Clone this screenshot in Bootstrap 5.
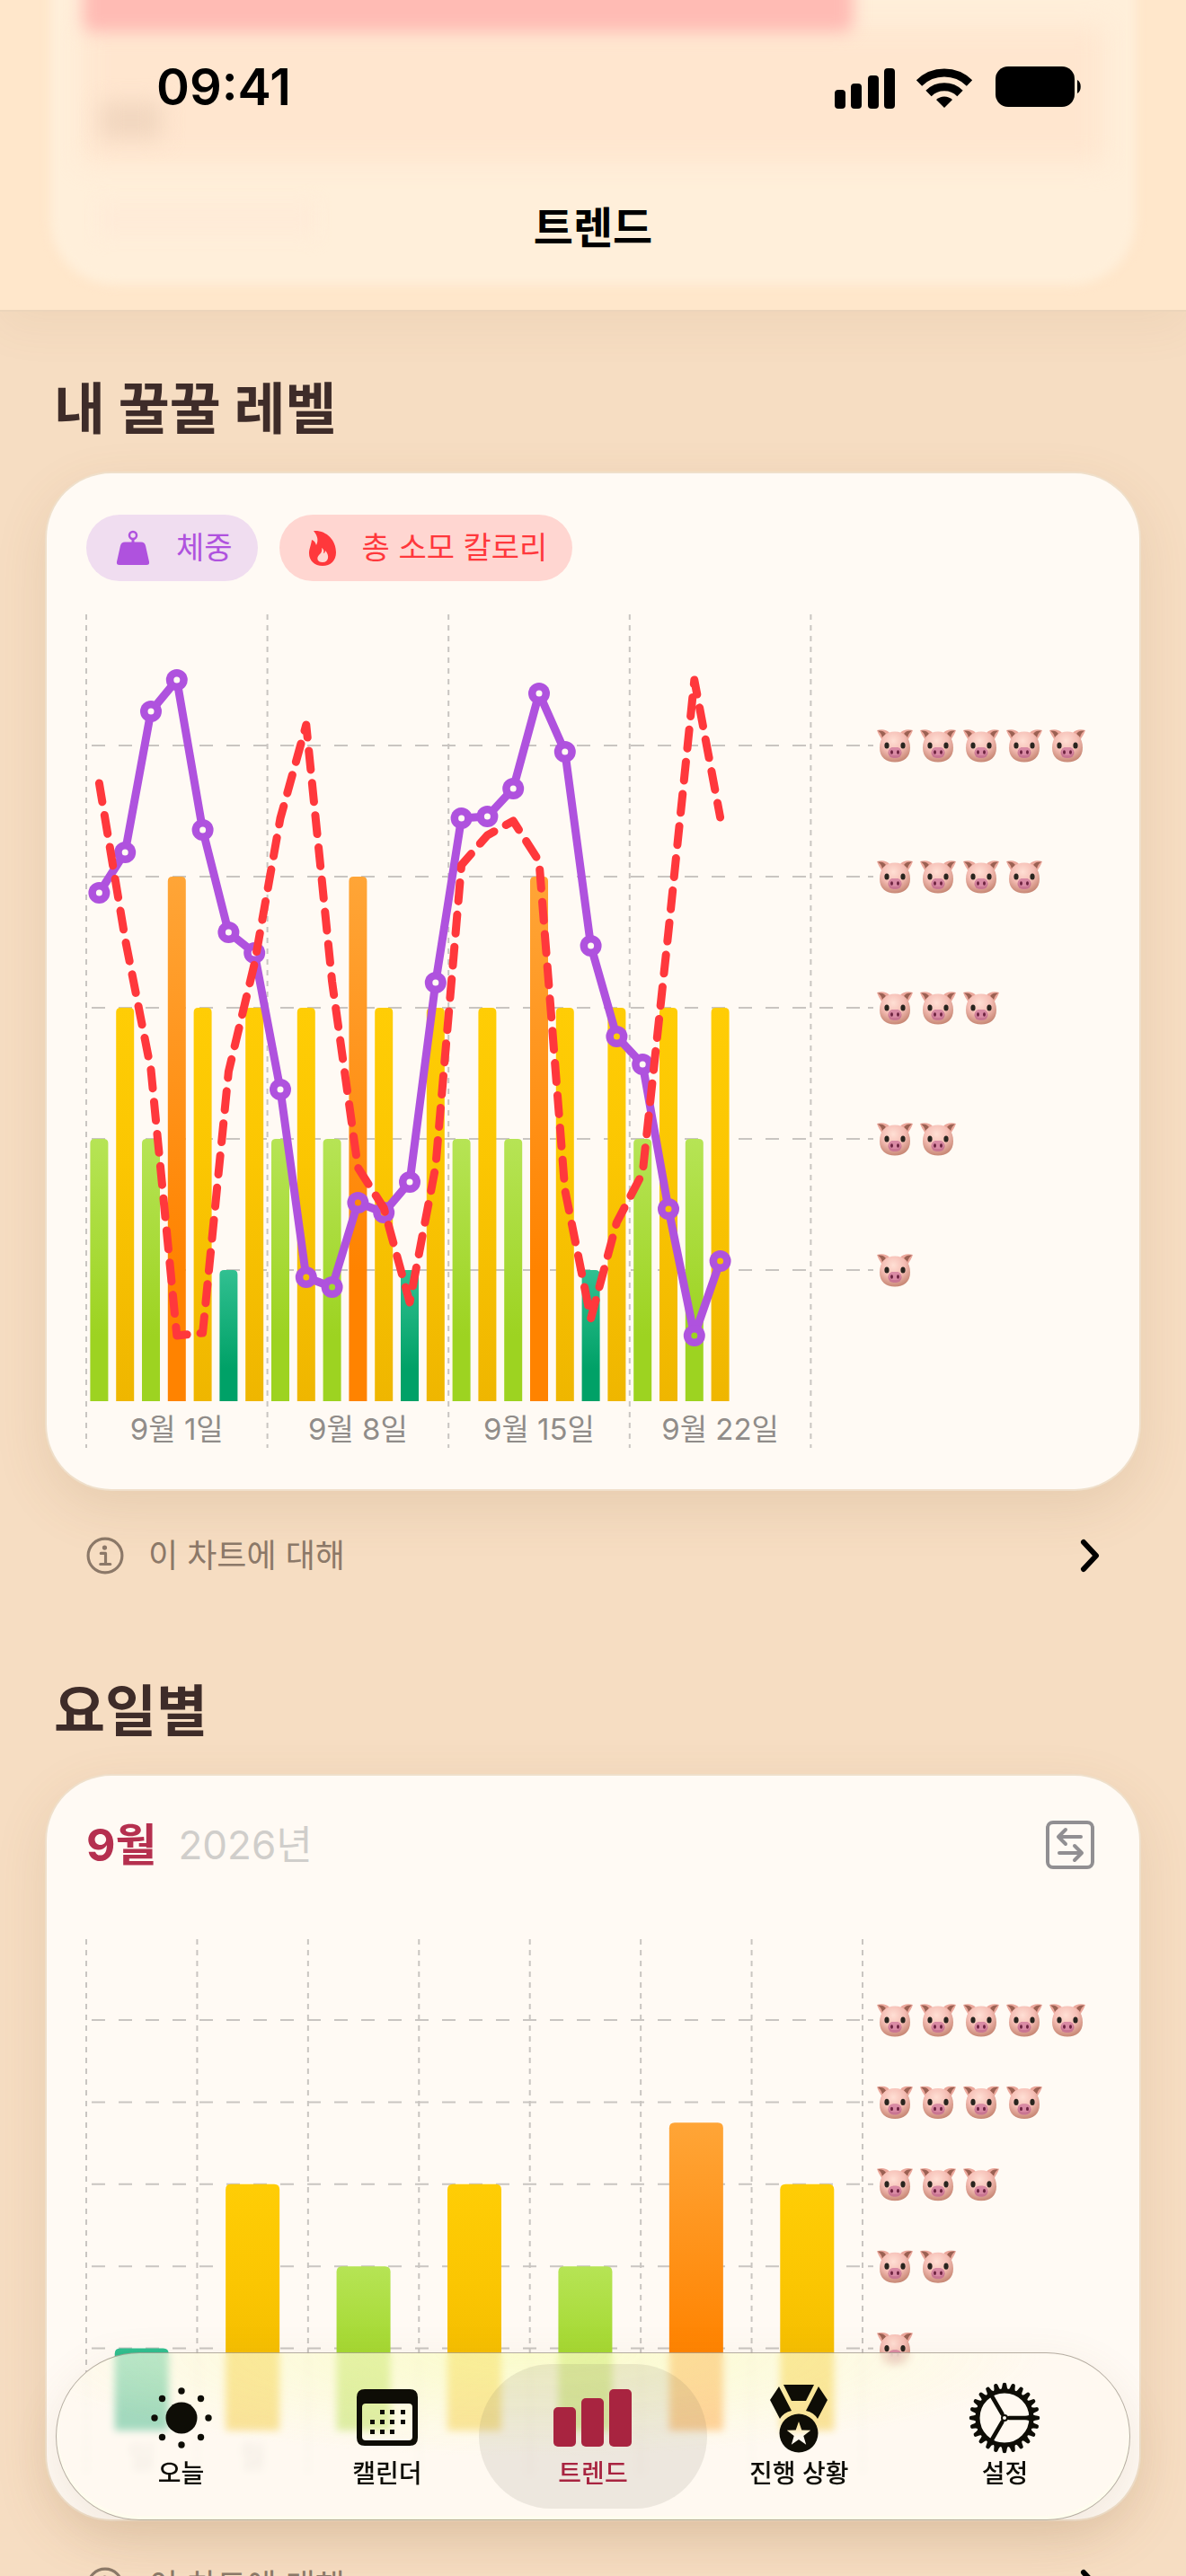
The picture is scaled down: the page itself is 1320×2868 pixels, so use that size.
<!DOCTYPE html>
<html lang="ko">
<head>
<meta charset="utf-8">
<meta name="viewport" content="width=device-width, initial-scale=1">
<title>트렌드</title>
<link href="https://cdn.jsdelivr.net/npm/bootstrap@5.3.0/dist/css/bootstrap.min.css" rel="stylesheet">
<style>
  body { font-family: Inter, "Noto Sans CJK KR", sans-serif; background: #f6ddc2; color: #000; }
  .app-screen { padding: 0 52px; }
  .top-bar { height: 347px; margin: 0 -52px; background: #ffe7cb; border-bottom: 2px solid #ecd5bb; box-shadow: 0 16px 48px rgba(150, 110, 70, .07); }
  .under { inset: 0; pointer-events: none; }
  .under-panel { inset: -80px 56px 28px; border-radius: 72px; background: #ffefda; filter: blur(6px); }
  .under-field { inset: 30px 92px 164px; background: #ffe6cf; filter: blur(14px); }
  .under-bar { left: 92px; top: -60px; width: 65%; height: 96px; background: #ffbbb4; filter: blur(9px); border-radius: 12px; }
  .under-mark { left: 112px; top: 114px; width: 68px; height: 40px; background: #f1d6bf; filter: blur(12px); }
  .under-note { left: 110px; top: 226px; width: 240px; height: 36px; background: #ffebd8; filter: blur(10px); }
  .status-row { height: 194px; padding: 0 114px 0 174px; }
  .clock { font-size: 56px; font-weight: 600; line-height: 64px; }
  .page-title { font-size: 48px; font-weight: 600; line-height: 64px; margin: 28px 0 0; }
  .section-title { font-size: 62px; font-weight: 700; line-height: 76px; color: #3e2c29; padding-left: 8px; margin: 0 0 33px; }
  .section-first { margin-top: 71px; }
  .section-next { margin-top: 102px; }
  .panel { background: #fffaf4; border: 0; border-radius: 72px; padding: 46px 44px; box-shadow: 0 0 0 2px #efdfca, 0 20px 60px rgba(140, 100, 60, .14); }
  .pill { height: 74px; padding: 0 28px 0 32px; gap: 28px; font-size: 34px; line-height: 40px; border: 0; }
  .pill-weight { background: #f0ddf0; color: #af52de; }
  .pill-energy { background: #ffd6d1; color: #ff383c; }
  .pill-row { gap: 24px; margin-bottom: 37px; }
  .chart { display: block; width: 100%; height: auto; overflow: visible; }
  .chart text { font-size: 33px; fill: #908c89; text-anchor: middle; }
  .rule-v { stroke: #c9c5c1; stroke-width: 2; stroke-dasharray: 6 6; }
  .rule-h { stroke: #c9c5c1; stroke-width: 2; stroke-dasharray: 15 15; }
  .about { height: 68px; margin: 40px 0 0; padding: 0 44px; color: #8c7969; font-size: 36px; line-height: 44px; }
  .about:hover { color: #8c7969; }
  .about-gap { gap: 27px; }
  .period { gap: 24px; margin-bottom: 74px; }
  .period-month { font-size: 50px; font-weight: 700; line-height: 62px; color: #b5304f; }
  .period-year { font-size: 44px; font-weight: 400; line-height: 62px; color: #d0cecb; }
  .swap-btn { color: #918f92; line-height: 0; margin-right: 6px; }
  .tab-dock { padding: 0 62px 62px; }
  .tab-glass { height: 187px; border-radius: 94px; padding: 12px 24px; border: 1px solid rgba(120, 110, 95, .55);
    background: radial-gradient(ellipse 48% 62% at 44% 0, rgba(244, 255, 150, .42), rgba(250, 255, 200, 0)), rgba(255, 249, 239, .64);
    -webkit-backdrop-filter: blur(4px); backdrop-filter: blur(4px); box-shadow: 0 16px 50px rgba(140, 100, 60, .12), inset 0 -3px 3px rgba(255, 255, 235, .8); }
  .tab-item { color: #0e0d06; font-size: 28px; font-weight: 500; line-height: 36px; padding: 18px 0 0; gap: 2px; text-decoration: none; }
  .tab-item svg { display: block; }
  .tab-active { color: #a82440; }
  .tab-active::before { content: ""; position: absolute; inset: 0 -12px; border-radius: 82px; background: rgba(105, 95, 85, .12); }
  .tab-active > * { position: relative; }
</style>
</head>
<body>
<svg width="0" height="0" class="position-absolute" aria-hidden="true">
  <defs>
    <radialGradient id="skin" cx=".45" cy=".3" r=".75"><stop offset="0" stop-color="#ffdfd4"/><stop offset=".5" stop-color="#f5bdb4"/><stop offset="1" stop-color="#c07f6b"/></radialGradient>
    <linearGradient id="lv1" x2="0" y2="1"><stop offset="0" stop-color="#31c091"/><stop offset=".75" stop-color="#00a167"/></linearGradient>
    <linearGradient id="lv2" x2="0" y2="1"><stop offset="0" stop-color="#b6e455"/><stop offset=".75" stop-color="#9dd321"/></linearGradient>
    <linearGradient id="lv3" x2="0" y2="1"><stop offset="0" stop-color="#ffcd05"/><stop offset=".4" stop-color="#fbc602"/><stop offset="1" stop-color="#efb600"/></linearGradient>
    <linearGradient id="lv4" x2="0" y2="1"><stop offset="0" stop-color="#ffa537"/><stop offset=".75" stop-color="#ff8300"/></linearGradient>
    <symbol id="pig" viewBox="0 0 40 37">
      <path d="M0 1C5-.5 11 0 14 4L6 13C4 8 1 5 0 1Z" fill="#eba79b"/><path d="M40 1C35-.5 29 0 26 4l8 9c2-5 5-8 6-12Z" fill="#eba79b"/>
      <path d="M1 1.500C5 1 8 2 10 5L6 9C5 5 3 3 1 1.500Z" fill="#9b6153"/><path d="M39 1.500C35 1 32 2 30 5l4 4c1-4 3-6 5-7.500Z" fill="#9b6153"/>
      <path d="M20 2.500C30 2.500 37 9 37 20.500 37 31 30 36.500 20 36.500S3 31 3 20.500C3 9 10 2.500 20 2.500Z" fill="url(#skin)"/>
      <ellipse cx="11" cy="18" rx="2.600" ry="3.600" fill="#29251f"/><ellipse cx="29" cy="18" rx="2.600" ry="3.600" fill="#29251f"/>
      <rect x="12.500" y="20" width="15" height="12" rx="6" fill="#c97592"/><rect x="13.500" y="20" width="13" height="9" rx="4.500" fill="#d98aa4"/>
      <ellipse cx="16.500" cy="25.500" rx="1.500" ry="2.200" fill="#6d2340"/><ellipse cx="23.500" cy="25.500" rx="1.500" ry="2.200" fill="#6d2340"/>
    </symbol>
    <symbol id="info" viewBox="0 0 40 40"><circle cx="20" cy="20" r="18" fill="none" stroke="currentColor" stroke-width="3"/><circle cx="19.500" cy="11.500" r="2.500" fill="currentColor"/><path d="M15.500 17.500h5v11M15 29h10.500" fill="none" stroke="currentColor" stroke-width="3" stroke-linecap="round" stroke-linejoin="round"/></symbol>
    <symbol id="chevron" viewBox="0 0 22 38"><path d="M4 4l14 15L4 34" fill="none" stroke="#000" stroke-width="6" stroke-linecap="round" stroke-linejoin="round"/></symbol>
  </defs>
</svg>

<div class="app-screen vh-100 overflow-hidden">
  <header class="top-bar position-relative">
    <div class="under position-absolute overflow-hidden">
      <div class="under-panel position-absolute"></div>
      <div class="under-field position-absolute"></div>
      <div class="under-bar position-absolute"></div>
      <div class="under-mark position-absolute"></div>
      <div class="under-note position-absolute"></div>
    </div>
    <div class="position-relative">
      <div class="status-row d-flex align-items-center justify-content-between">
        <span class="clock">09:41</span>
        <svg width="278" height="48" viewBox="0 0 278 48" role="img" aria-label="신호, Wi-Fi, 배터리">
          <rect x="1" y="27" width="12" height="21" rx="4"/><rect x="19" y="20" width="12" height="28" rx="4"/><rect x="38" y="11" width="12" height="37" rx="4"/><rect x="56" y="3" width="12" height="45" rx="4"/>
          <g fill="none" stroke="#000" stroke-width="9"><path d="M95 19.500a40 40 0 0 1 56 0"/><path d="M105.500 31a25 25 0 0 1 35 0"/></g>
          <path d="M123 47l-9-9a13 13 0 0 1 18 0Z"/>
          <rect x="180" y="1" width="88" height="45" rx="14"/><path d="M271 16c5 2 5 13 0 15Z"/>
        </svg>
      </div>
      <h1 class="page-title text-center">트렌드</h1>
    </div>
  </header>

  <main>
    <section>
      <h2 class="section-title section-first">내 꿀꿀 레벨</h2>
      <div class="card panel">
        <div class="pill-row d-flex">
          <button type="button" class="pill pill-weight rounded-pill d-flex align-items-center">
            <svg width="40" height="40" viewBox="0 0 40 40" aria-hidden="true"><circle cx="20" cy="6" r="4" fill="none" stroke="currentColor" stroke-width="2.500"/><path d="M18.500 9.500h3v5h-3zM11 13.500h18q4 0 5 4l4 18q.6 3.500-3 3.500H5q-3.600 0-3-3.500l4-18q1-4 5-4Z" fill="currentColor"/></svg>
            <span>체중</span>
          </button>
          <button type="button" class="pill pill-energy rounded-pill d-flex align-items-center">
            <svg width="32" height="40" viewBox="0 0 32 40" aria-hidden="true"><path fill="currentColor" fill-rule="evenodd" d="M6 1C20 0 31 11 31 25c0 9-6 15-15 15S1 34 1 26c0-5 2-8 3-15 3 1 4 3 5 6C12 11 10 6 6 1ZM15 20c1 4-1 6-3 8-3 3-2 8 4 8 7 0 8-8 3-13 0 2-1 3-2 3 1-3 0-5-2-6Z"/></svg>
            <span>총 소모 칼로리</span>
          </button>
        </div>
        <svg id="levelChart" class="chart" viewBox="96 684 1128 928" role="img" aria-label="내 꿀꿀 레벨 차트"></svg>
      </div>
      <a href="#" class="about d-flex align-items-center justify-content-between text-decoration-none">
        <span class="about-gap d-flex align-items-center"><svg width="42" height="42" aria-hidden="true"><use href="#info"/></svg>이 차트에 대해</span>
        <svg width="22" height="38" aria-hidden="true"><use href="#chevron"/></svg>
      </a>
    </section>

    <section>
      <h2 class="section-title section-next">요일별</h2>
      <div class="card panel">
        <div class="period d-flex align-items-center">
          <span class="period-month">9월</span>
          <span class="period-year me-auto">2026년</span>
          <button type="button" class="swap-btn btn p-0 border-0" aria-label="전환">
            <svg width="54" height="54" viewBox="0 0 54 54" fill="none" stroke="currentColor" stroke-width="4" stroke-linecap="round" stroke-linejoin="round"><rect x="2" y="2" width="50" height="50" rx="6"/><path d="M39 18H15M22 10l-8 8 8 8M15 36h24M32 28l8 8-8 8"/></svg>
          </button>
        </div>
        <svg id="weekdayChart" class="chart" viewBox="96 2158 1128 600" role="img" aria-label="요일별 차트"></svg>
      </div>
      <a href="#" class="about d-flex align-items-center justify-content-between text-decoration-none">
        <span class="about-gap d-flex align-items-center"><svg width="42" height="42" aria-hidden="true"><use href="#info"/></svg>이 차트에 대해</span>
        <svg width="22" height="38" aria-hidden="true"><use href="#chevron"/></svg>
      </a>
    </section>
  </main>
</div>

<div class="tab-dock fixed-bottom">
  <nav class="tab-glass d-flex">
    <a href="#" class="tab-item flex-fill w-100 position-relative d-flex flex-column align-items-center">
      <svg width="84" height="84" viewBox="-42 -42 84 84" fill="currentColor" aria-hidden="true"><circle r="17.500"/><circle cx="30" r="3.700"/><circle cx="-30" r="3.700"/><circle cy="30" r="3.700"/><circle cy="-30" r="3.700"/><circle cx="21.500" cy="21.500" r="3.700"/><circle cx="-21.500" cy="21.500" r="3.700"/><circle cx="21.500" cy="-21.500" r="3.700"/><circle cx="-21.500" cy="-21.500" r="3.700"/></svg>
      <span>오늘</span>
    </a>
    <a href="#" class="tab-item flex-fill w-100 position-relative d-flex flex-column align-items-center">
      <svg width="84" height="84" viewBox="0 0 84 84" fill="currentColor" aria-hidden="true"><path fill-rule="evenodd" d="M17 10h50q9 0 9 9v45q0 9-9 9H17q-9 0-9-9V19q0-9 9-9ZM18 26q-4 0-4 4v33q0 4 4 4h48q4 0 4-4V30q0-4-4-4Z"/><path d="M34 33h5v5h-5zM45 33h5v5h-5zM57 33h5v5h-5zM23 44h5v5h-5zM34 44h5v5h-5zM45 44h5v5h-5zM57 44h5v5h-5zM23 55h5v5h-5zM34 55h5v5h-5zM45 55h5v5h-5z"/></svg>
      <span>캘린더</span>
    </a>
    <a href="#" class="tab-item tab-active flex-fill w-100 position-relative d-flex flex-column align-items-center" aria-current="page">
      <svg width="88" height="84" viewBox="0 0 88 84" fill="currentColor" aria-hidden="true"><rect x="0" y="30" width="25" height="44" rx="5"/><rect x="31" y="20" width="25" height="54" rx="5"/><rect x="62" y="10" width="25" height="64" rx="5"/></svg>
      <span>트렌드</span>
    </a>
    <a href="#" class="tab-item flex-fill w-100 position-relative d-flex flex-column align-items-center">
      <svg width="76" height="84" viewBox="0 -2 76 84" fill="currentColor" aria-hidden="true"><path d="M21 3h34l-9 18H30ZM16 5l14 27q-9 2-13 9L6 20ZM60 5L46 32q9 2 13 9l11-21Z"/><path fill-rule="evenodd" d="M38 35.500a21.500 21.500 0 1 1 0 43 21.500 21.500 0 0 1 0-43ZM38 44l-3.300 9.600-10 .2 8 6.200-2.900 9.800 8.200-5.800 8.200 5.800-2.900-9.800 8-6.200-10-.2Z"/></svg>
      <span>진행 상황</span>
    </a>
    <a href="#" class="tab-item flex-fill w-100 position-relative d-flex flex-column align-items-center">
      <svg id="gear" width="84" height="84" viewBox="-42 -42 84 84" fill="none" stroke="currentColor" stroke-linecap="round" aria-hidden="true"><circle r="30" stroke-width="5"/><circle r="3" stroke-width="2"/><path stroke-width="4.500" d="M5 0H29M-2.500-4.300L-14.500-25M-2.500 4.300L-14.500 25"/><path fill="currentColor" stroke="none" d="M31-6q-4 4-8 4v4q4 0 8 4ZM-20.700-23.800q5.500 2 7.500-1l0-6ZM-20.700 23.800q5.500-2 7.500 1l0 6Z"/></svg>
      <span>설정</span>
    </a>
  </nav>
</div>

<script src="https://cdn.jsdelivr.net/npm/bootstrap@5.3.0/dist/js/bootstrap.bundle.min.js"></script>
<script>
  const line = (c, x1, y1, x2, y2) => `<line class="${c}" x1="${x1}" y1="${y1}" x2="${x2}" y2="${y2}"/>`;
  const bar = (x, w, top, base, lv, r) => `<path fill="url(#lv${lv})" d="M${x} ${base}V${top + r}q0-${r} ${r}-${r}h${w - 2 * r}q${r} 0 ${r} ${r}V${base}Z"/>`;
  const pigs = (n, y) => Array.from({ length: n }, (_, i) => `<use href="#pig" x="${976 + 48 * i}" y="${y - 18}" width="40" height="37"/>`).join('');

  // Daily levels with weight and energy lines
  const level = [2,3,2,4,3,1,3,2,3,2,4,3,1,3,2,3,2,4,3,1,3,2,3,2,3];
  const weight = [994,949,792,757,924,1038,1061,1213,1422,1433,1339,1350,1316,1094,911,909,878,772,837,1053,1154,1185,1346,1487,1404];
  const energy = [872,1045,1191,1487,1484,1193,1073,911,807,1093,1300,1345,1450,1299,963,930,914,959,1325,1468,1361,1306,1037,757,910];
  const dayX = i => 110.4 + 28.8 * i;
  let s = '';
  for (let i = 0; i < 5; i++) s += line('rule-v', 96 + 201.6 * i, 684, 96 + 201.6 * i, 1612);
  for (let n = 1; n < 6; n++) { const y = 1560 - 146 * n; s += line('rule-h', 102, y, 960, y) + line('rule-h', 966, y, 972, y) + pigs(n, y); }
  level.forEach((v, i) => s += bar(dayX(i) - 10, 20, 1560 - 146 * v, 1560, v, 5));
  s += `<mask id="holes" maskUnits="userSpaceOnUse" x="96" y="684" width="900" height="900"><rect x="96" y="684" width="900" height="900" fill="#fff"/>${weight.map((y, i) => `<circle cx="${dayX(i)}" cy="${y}" r="3.500"/>`).join('')}</mask>`;
  s += `<g mask="url(#holes)" fill="#af52de"><polyline fill="none" stroke="#af52de" stroke-width="9" stroke-linejoin="round" points="${weight.map((y, i) => dayX(i) + ',' + y).join(' ')}"/>${weight.map((y, i) => `<circle cx="${dayX(i)}" cy="${y}" r="12"/>`).join('')}</g>`;
  s += `<polyline fill="none" stroke="#ff383c" stroke-width="9" stroke-linecap="round" stroke-linejoin="round" stroke-dasharray="21 15" points="${energy.map((y, i) => dayX(i) + ',' + y).join(' ')}"/>`;
  ['9월 1일', '9월 8일', '9월 15일', '9월 22일'].forEach((t, i) => s += `<text x="${196.8 + 201.6 * i}" y="1603">${t}</text>`);
  document.getElementById('levelChart').innerHTML = s;

  // Average level per weekday
  const avg = [[1, 1], [3, 3], [2, 2], [3, 3], [2, 2], [3.75, 4], [3, 3]];
  const step = 864 / 7;
  s = '';
  for (let i = 0; i < 8; i++) s += line('rule-v', 96 + step * i, 2158, 96 + step * i, 2758);
  for (let n = 1; n < 6; n++) { const y = 2705 - 91.4 * n; s += line('rule-h', 102, y, 960, y) + line('rule-h', 966, y, 972, y) + pigs(n, y); }
  avg.forEach(([v, lv], i) => s += bar(96 + step * (i + .5) - 30, 60, 2705 - 91.4 * v, 2705, lv, 6));
  ['일', '월'].forEach((t, i) => s += `<text opacity=".4" x="${96 + step * (i + .5)}" y="2746">${t}</text>`);
  document.getElementById('weekdayChart').innerHTML = s;

  // Gear teeth
  let teeth = '';
  for (let a = 0; a < 360; a += 15) teeth += `<path fill="currentColor" stroke="none" transform="rotate(${a})" d="M31-4q3 1.500 6 1.700a2 2 0 0 1 0 4.600q-3 .2-6 1.700Z"/>`;
  document.getElementById('gear').insertAdjacentHTML('beforeend', teeth);
</script>
</body>
</html>
